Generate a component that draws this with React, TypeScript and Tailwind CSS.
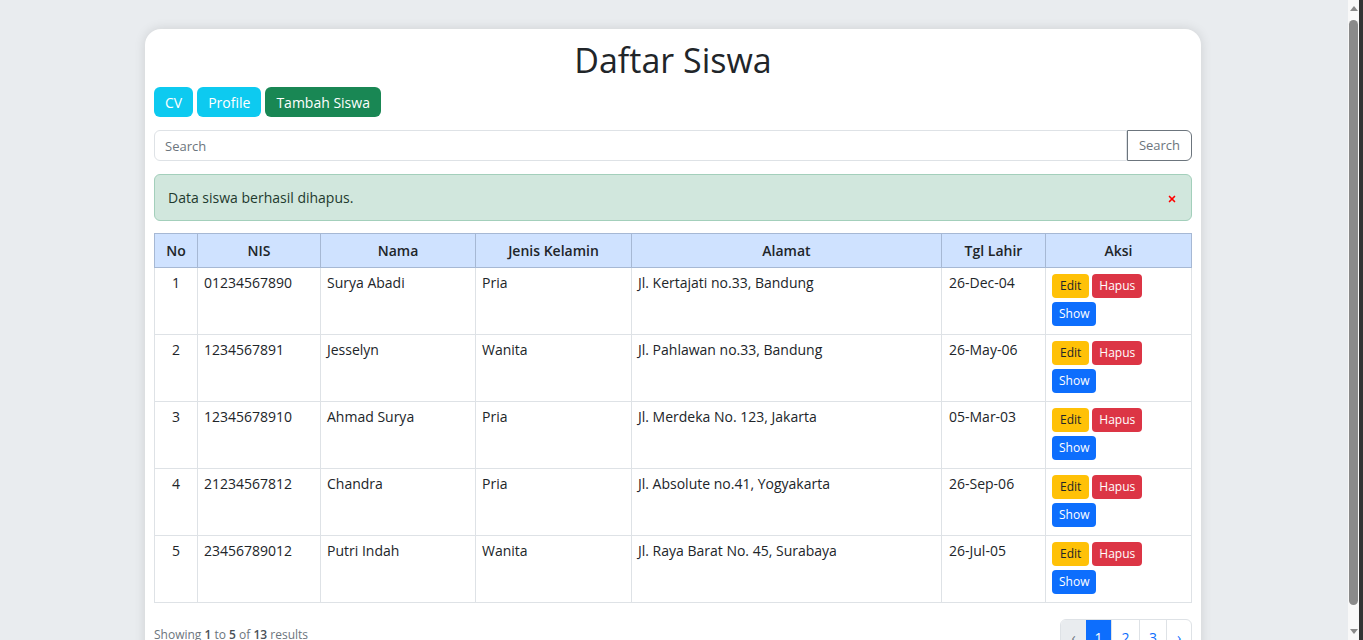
import { X } from "lucide-react";

const students = [
  { no: 1, nis: "01234567890", nama: "Surya Abadi", jk: "Pria", alamat: "Jl. Kertajati no.33, Bandung", tgl: "26-Dec-04" },
  { no: 2, nis: "1234567891", nama: "Jesselyn", jk: "Wanita", alamat: "Jl. Pahlawan no.33, Bandung", tgl: "26-May-06" },
  { no: 3, nis: "12345678910", nama: "Ahmad Surya", jk: "Pria", alamat: "Jl. Merdeka No. 123, Jakarta", tgl: "05-Mar-03" },
  { no: 4, nis: "21234567812", nama: "Chandra", jk: "Pria", alamat: "Jl. Absolute no.41, Yogyakarta", tgl: "26-Sep-06" },
  { no: 5, nis: "23456789012", nama: "Putri Indah", jk: "Wanita", alamat: "Jl. Raya Barat No. 45, Surabaya", tgl: "26-Jul-05" },
];

// the browser's scrollbar, as it shows in the screenshot
const ScrollBar = () => (
  <div className="flex w-[15px] shrink-0">
    <div className="flex w-[11px] flex-col items-center bg-[#f8f8f8] py-[6px]">
      <div className="h-0 w-0 border-x-[4px] border-b-[5px] border-x-transparent border-b-[#8a8a8a]" />
      <div className="mt-[9px] w-[9px] flex-1 rounded-full bg-[#8a8a8a]" />
      <div className="mt-[24px] h-0 w-0 border-x-[4px] border-t-[5px] border-x-transparent border-t-[#8a8a8a]" />
    </div>
    <div className="w-[4px] bg-[#333333]" />
  </div>
);

const App = () => {
  return (
    <div className="flex h-screen overflow-hidden bg-[#e9ecef] font-['Open_Sans',sans-serif] text-[#212529]">
      <main className="flex-1 overflow-hidden pt-[29px] pr-[2px]">
        <div className="mx-auto w-[1056px] rounded-2xl bg-white px-[9px] pt-[10px] pb-6 shadow-[0_0_12px_rgba(0,0,0,0.12)]">
          <h1 className="text-center text-[34px] leading-[42px] font-normal text-[#212529]">Daftar Siswa</h1>

          <div className="mt-[6px] flex gap-1">
            <button className="h-[30px] rounded-md bg-[#0dcaf0] px-[11px] text-[14px] text-white">CV</button>
            <button className="h-[30px] rounded-md bg-[#0dcaf0] px-[11px] text-[14px] text-white">Profile</button>
            <button className="h-[30px] rounded-md bg-[#198754] px-[11px] text-[14px] text-white">Tambah Siswa</button>
          </div>

          <form className="mt-[13px] flex" onSubmit={(e) => e.preventDefault()}>
            <input
              placeholder="Search"
              className="h-[31px] flex-1 rounded-l-md border border-[#dee2e6] px-[10px] text-[13px] placeholder:text-[#6c757d] focus:outline-none"
            />
            <button className="h-[31px] w-[65px] rounded-r-md border border-[#6c757d] text-[13px] text-[#6c757d]">Search</button>
          </form>

          <div className="mt-[13px] flex h-[47px] items-center justify-between rounded-md border border-[#a3cfbb] bg-[#d1e7dd] pl-[13px] pr-[14px] text-[14px] text-[#1e3a2e]">
            <span>Data siswa berhasil dihapus.</span>
            <X size={10} strokeWidth={4} className="mt-[3px] text-[#ff0000]" />
          </div>

          <table className="mt-[12px] w-full border-collapse text-[14px]">
            <thead>
              <tr className="h-[34px] bg-[#cfe2ff]">
                <th className="w-[43px] border border-[#a6b8d4] font-semibold">No</th>
                <th className="w-[123px] border border-[#a6b8d4] font-semibold">NIS</th>
                <th className="w-[155px] border border-[#a6b8d4] font-semibold">Nama</th>
                <th className="w-[156px] border border-[#a6b8d4] font-semibold">Jenis Kelamin</th>
                <th className="w-[310px] border border-[#a6b8d4] font-semibold">Alamat</th>
                <th className="w-[104px] border border-[#a6b8d4] font-semibold">Tgl Lahir</th>
                <th className="border border-[#a6b8d4] font-semibold">Aksi</th>
              </tr>
            </thead>
            <tbody>
              {students.map((s) => (
                <tr key={s.no} className="h-[67px] align-top">
                  <td className="border border-[#dee2e6] pt-[4px] text-center">{s.no}</td>
                  <td className="border border-[#dee2e6] px-[6px] pt-[4px]">{s.nis}</td>
                  <td className="border border-[#dee2e6] px-[6px] pt-[4px]">{s.nama}</td>
                  <td className="border border-[#dee2e6] px-[6px] pt-[4px]">{s.jk}</td>
                  <td className="border border-[#dee2e6] px-[6px] pt-[4px]">{s.alamat}</td>
                  <td className="border border-[#dee2e6] px-[7px] pt-[4px]">{s.tgl}</td>
                  <td className="border border-[#dee2e6] px-[6px] pt-[6px]">
                    <div className="flex w-[96px] flex-wrap gap-x-[3px] gap-y-[4px]">
                      <button className="h-[24px] rounded bg-[#ffc107] px-[8px] text-[12px] text-[#212529]">Edit</button>
                      <button className="h-[24px] rounded bg-[#dc3545] px-[7px] text-[12px] text-white">Hapus</button>
                      <button className="h-[24px] rounded bg-[#0d6efd] px-[7px] text-[12px] text-white">Show</button>
                    </div>
                  </td>
                </tr>
              ))}
            </tbody>
          </table>

          <div className="mt-4 flex items-start justify-between">
            <p className="mt-[7px] text-[12px] text-[#6c757d]">
              Showing <span className="font-semibold text-[#495057]">1</span> to{" "}
              <span className="font-semibold text-[#495057]">5</span> of{" "}
              <span className="font-semibold text-[#495057]">13</span> results
            </p>
            <nav className="flex h-[36px] overflow-hidden rounded-md border border-[#dee2e6] text-[14px]">
              <span className="flex w-[25px] items-center justify-center bg-[#e9ecef] text-[#6c757d]">‹</span>
              <span className="flex w-[25px] items-center justify-center bg-[#0d6efd] text-white">1</span>
              <span className="flex w-[28px] items-center justify-center border-l border-[#dee2e6] text-[#0d6efd]">2</span>
              <span className="flex w-[27px] items-center justify-center border-l border-[#dee2e6] text-[#0d6efd]">3</span>
              <span className="flex w-[25px] items-center justify-center border-l border-[#dee2e6] text-[#0d6efd]">›</span>
            </nav>
          </div>
        </div>
      </main>
      <ScrollBar />
    </div>
  );
};

export default App;
